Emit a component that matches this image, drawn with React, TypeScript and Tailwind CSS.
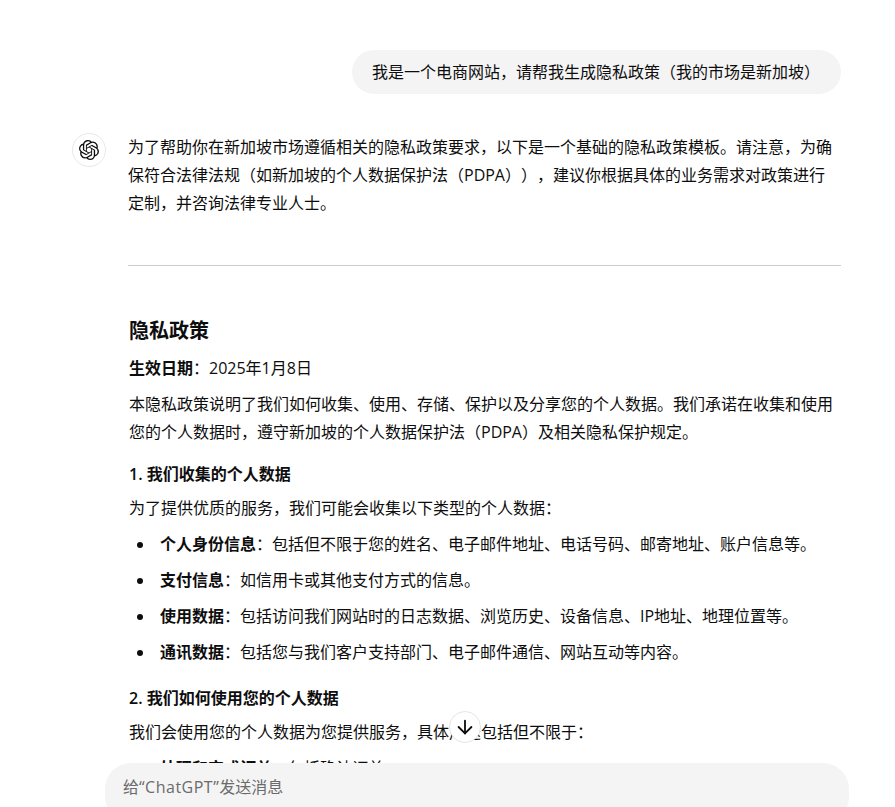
import { ArrowDown } from "lucide-react";
import { SiOpenai } from "react-icons/si";

const FONT = "font-['Open_Sans','Noto_Sans_CJK_SC',sans-serif] [text-spacing-trim:space-all]";

const COLLECT_ITEMS = [
  { label: "个人身份信息", text: "：包括但不限于您的姓名、电子邮件地址、电话号码、邮寄地址、账户信息等。" },
  { label: "支付信息", text: "：如信用卡或其他支付方式的信息。" },
  { label: "使用数据", text: "：包括访问我们网站时的日志数据、浏览历史、设备信息、IP地址、地理位置等。" },
  { label: "通讯数据", text: "：包括您与我们客户支持部门、电子邮件通信、网站互动等内容。" },
];

function ListItem({ label, text }: { label: string; text: string }) {
  return (
    <li className="h-[36px] pl-[5px] leading-[36px]">
      <strong className="font-semibold">{label}</strong>
      {text}
    </li>
  );
}

function UserBubble() {
  return (
    <div className="flex justify-end pr-[54px]">
      <div className="h-[44px] rounded-[22px] bg-[#f4f4f4] pr-[21px] pl-5 leading-[44px]">
        我是一个电商网站，请帮我生成隐私政策（我的市场是新加坡）
      </div>
    </div>
  );
}

function PolicyBody() {
  return (
    <div className="mt-[49px] w-[713px] pl-px">
      <h3 className="text-[20px] leading-[32px] font-semibold">隐私政策</h3>
      <p className="mt-[7px] leading-[28px]">
        <strong className="font-semibold">生效日期</strong>：2025年1月8日
      </p>
      <p className="mt-[8px] w-[712px] leading-[28px]">
        本隐私政策说明了我们如何收集、使用、存储、保护以及分享您的个人数据。我们承诺在收集和使用您的个人数据时，遵守新加坡的个人数据保护法（PDPA）及相关隐私保护规定。
      </p>
      <h4 className="mt-[14px] leading-[28px] font-semibold">1. 我们收集的个人数据</h4>
      <p className="mt-[6px] leading-[28px]">为了提供优质的服务，我们可能会收集以下类型的个人数据：</p>
      <ul className="mt-[4px] list-disc pl-[26px]">
        {COLLECT_ITEMS.map((item) => (
          <ListItem key={item.label} label={item.label} text={item.text} />
        ))}
      </ul>
      <h4 className="mt-[14px] leading-[28px] font-semibold">2. 我们如何使用您的个人数据</h4>
      <p className="mt-[6px] leading-[28px]">我们会使用您的个人数据为您提供服务，具体用途包括但不限于：</p>
      <ul className="mt-[4px] list-disc pl-[26px]">
        <ListItem label="处理和完成订单" text="：包括确认订单" />
      </ul>
    </div>
  );
}

function AssistantMessage() {
  return (
    <div className="mt-[39px] flex pl-[72px]">
      <div className="flex h-[34px] w-[34px] shrink-0 items-center justify-center rounded-full border border-[#e8e8e8] bg-white">
        <SiOpenai className="h-[20px] w-[20px] text-[#0d0d0d]" />
      </div>
      <div className="ml-[22px] w-[713px]">
        <p className="w-[712px] leading-[28px]">
          为了帮助你在新加坡市场遵循相关的隐私政策要求，以下是一个基础的隐私政策模板。请注意，为确保符合法律法规（如新加坡的个人数据保护法（PDPA）），建议你根据具体的业务需求对政策进行定制，并咨询法律专业人士。
        </p>
        <hr className="mt-[48px] border-t border-[#cdcdcd]" />
        <PolicyBody />
      </div>
    </div>
  );
}

export default function App() {
  return (
    <div className={`relative h-[807px] w-[895px] overflow-hidden bg-white text-[16px] text-[#0d0d0d] ${FONT}`}>
      {/* 대화 영역: 입력창 위에서 잘림 */}
      <div className="h-[763px] overflow-hidden pt-[50px]">
        <UserBubble />
        <AssistantMessage />
      </div>

      {/* 스크롤 버튼 */}
      <button className="absolute top-[711px] left-[449px] flex h-[32px] w-[32px] items-center justify-center rounded-full border border-[#e5e5e5] bg-white">
        <ArrowDown className="h-[22px] w-[22px] text-[#0d0d0d]" strokeWidth={2} />
      </button>

      {/* 입력창 */}
      <div className="absolute top-[763px] left-[105px] h-[60px] w-[744px] rounded-[26px] bg-[#f4f4f4] pt-[12px] pl-[18px] leading-[24px] text-[#6b6b6b]">
        给<span className="tracking-[0.5px]">“ChatGPT”</span>发送消息
      </div>
    </div>
  );
}
